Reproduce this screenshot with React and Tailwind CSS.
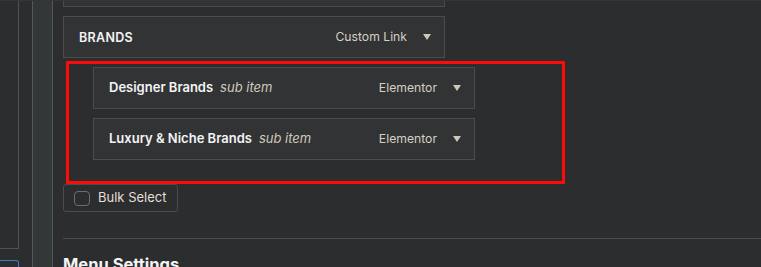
import React from 'react';

const font = { fontFamily: 'Inter, "Noto Sans", sans-serif' };

function Caret() {
  return (
    <svg width="8" height="6" viewBox="0 0 8 6" className="shrink-0">
      <path d="M0 0 H8 L4 6 Z" fill="#cfc8ba" />
    </svg>
  );
}

function MenuItem({ title, sub, type, upper = false }) {
  return (
    <div className="flex shrink-0 items-center h-[42px] w-[382px] border border-[#4b4c4e] bg-[#323335] pl-[15px] pr-[13px]">
      <span className={`font-semibold text-[#f4f4f4] ${upper ? 'text-[12.5px] tracking-[0.3px] mt-[2px]' : 'text-[13px]'}`}>
        {title}
      </span>
      {sub && <span className="ml-[7px] italic text-[13px] text-[#d0c9bc]">{sub}</span>}
      <span className="ml-auto text-[12.2px] text-[#d6d0c4]">{type}</span>
      <span className="ml-[16px]"><Caret /></span>
    </div>
  );
}

export default function App() {
  return (
    <div className="flex w-[761px] h-[267px] overflow-hidden bg-[#2c2d2f] border-t border-[#353638]" style={font}>
      {/* left rails */}
      <div className="flex w-[63px] shrink-0">
        <div className="flex flex-col w-[19px] shrink-0">
          <div className="h-[248px] shrink-0 border-r border-b border-[#4f5253]" />
          <div className="h-[11px] shrink-0" />
          <div className="flex-1 border-t border-r border-[#3a7fc4] rounded-tr-[3px]" />
        </div>
        <div className="w-[13px]" />
        <div className="w-[21px] bg-[#333738] border-x border-[#4f5a5a]" />
      </div>

      {/* main column */}
      <div className="flex flex-col flex-1 min-w-0">
        <div className="h-[6px] shrink-0 w-[382px] border-x border-b border-[#4b4c4e] bg-[#323335]" />
        <div className="mt-[9px] shrink-0">
          <MenuItem title="BRANDS" type="Custom Link" upper />
        </div>

        <div className="mt-[3px] ml-[3px] shrink-0 w-[499px] h-[123px] border-[3px] border-[#ff0a0a] pl-[24px] pt-[3px] flex flex-col gap-[9px]">
          <MenuItem title="Designer Brands" sub="sub item" type="Elementor" />
          <MenuItem title="Luxury & Niche Brands" sub="sub item" type="Elementor" />
        </div>

        <div className="shrink-0 flex items-center w-[115px] h-[28px] border border-[#4b4c4e] rounded-[3px] pl-[10px]">
          <span className="w-[16px] h-[15px] rounded-[4px] border border-[#6d6e70] bg-[#2c2d2f]" />
          <span className="ml-[8px] text-[13px] text-[#e4dfd5]">Bulk Select</span>
        </div>

        <div className="mt-[26px] shrink-0 h-px bg-[#4b4c4e]" />

        <div className="mt-[17px] shrink-0 text-[16.5px] font-bold text-[#f4f4f4] leading-none">Menu Settings</div>
      </div>
    </div>
  );
}
